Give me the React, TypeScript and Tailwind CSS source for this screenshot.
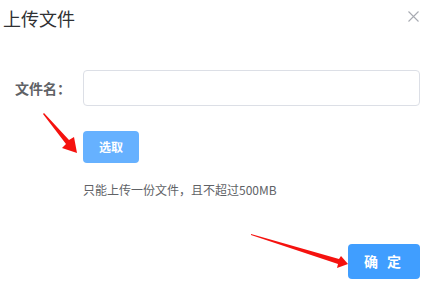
import React from 'react';

function RedArrow({ points }: { points: string }) {
  return (
    <svg className="absolute left-0 top-0 pointer-events-none" viewBox="0 0 437 289" width="437" height="289">
      <polygon points={points} fill="#f5120f" />
    </svg>
  );
}

export default function App() {
  return (
    <div
      className="relative w-[437px] h-[289px] bg-white overflow-hidden"
      style={{ fontFamily: '"Noto Sans CJK SC", "Liberation Sans", sans-serif' }}>
      <div className="flex items-start justify-between pl-[3px] pr-[18px] pt-[6px]">
        <span className="text-[18px] leading-[24px] text-[#303133]">上传文件</span>
        <svg className="mt-[5px]" width="11" height="11" viewBox="0 0 11 11">
          <path d="M0.5 0.5 L10.5 10.5 M10.5 0.5 L0.5 10.5" stroke="#a8abb2" strokeWidth="1.1" fill="none" />
        </svg>
      </div>

      <div className="flex items-center mt-[40px] pl-[3px] pr-[17px]">
        <label className="w-[80px] pr-[12px] text-right text-[14px] font-bold text-[#606266] shrink-0">文件名：</label>
        <input className="grow h-[36px] border border-[#dcdfe6] rounded-[4px] outline-none px-3" />
      </div>

      <div className="pl-[83px] mt-[25px]">
        <button className="w-[56px] h-[32px] rounded-[4px] bg-[#66b1ff] text-white text-[12px] font-bold">选取</button>
        <div className="mt-[19px] text-[12px] leading-[16px] text-[#606266]">只能上传一份文件，且不超过500MB</div>
      </div>

      <div className="flex justify-end pr-[17px] mt-[46px]">
        <button className="w-[72px] h-[35px] rounded-[4px] bg-[#409eff] text-white text-[14px] font-bold tracking-[3px]">确 定</button>
      </div>

      <RedArrow points="44,113 69,140 74,137 77,153 62,148 66,144 43,114" />
      <RedArrow points="251,234 339,259 341,256 348,264 337,268 338,264 251,235" />
    </div>
  );
}
